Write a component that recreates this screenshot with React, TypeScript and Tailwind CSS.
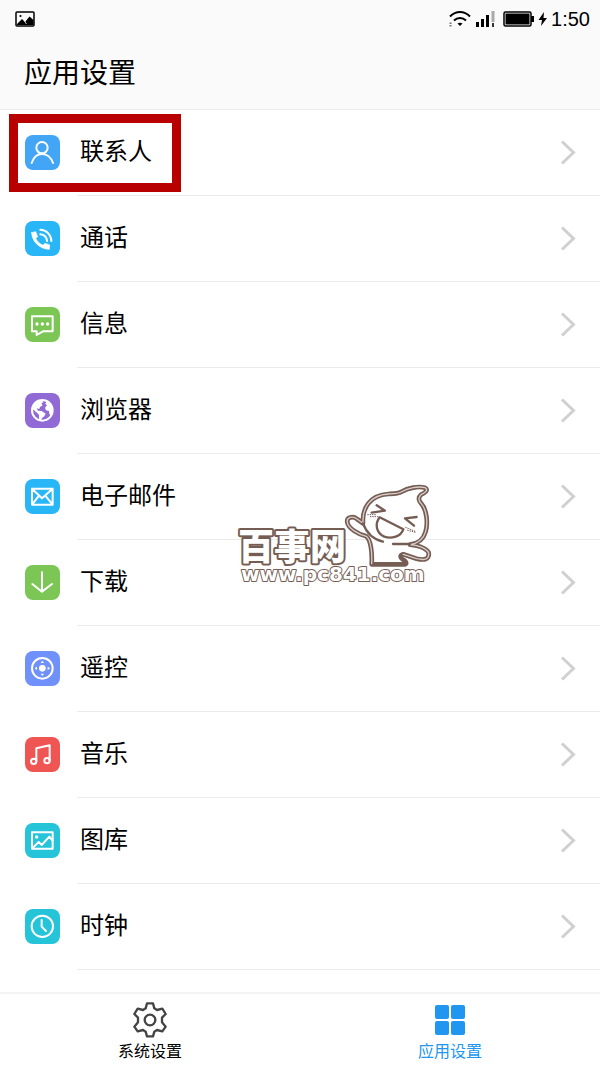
import { type ReactNode, useState } from 'react';
import { clsx } from 'clsx';

interface AppItem {
    id: string;
    label: string;
    color: string;
    icon: ReactNode;
}

const APPS: AppItem[] = [
    {
        id: 'contacts',
        label: '联系人',
        color: 'bg-[#42a5f5]',
        icon: (
            <>
                <circle cx="51" cy="38" r="17" />
                <path d="M20 84C26 66 38 57 51 57S78 66 84 84" />
            </>
        ),
    },
    {
        id: 'phone',
        label: '通话',
        color: 'bg-[#29b6f6]',
        icon: (
            <>
                <path d="M20 35L32 32L38 47L32 52C37 62 44 69 54 73L60 67L74 72L73 85C46 84 21 64 20 35Z" fill="white" strokeWidth="2" />
                <path d="M46 26C64 26 79 42 79 60M46 40C57 41 65 49 66 60" />
            </>
        ),
    },
    {
        id: 'messages',
        label: '信息',
        color: 'bg-[#7cc656]',
        icon: (
            <>
                <path d="M21 28H83V73H54L35 84V73H21Z" />
                <g fill="white" stroke="none">
                    <circle cx="36" cy="51" r="5" />
                    <circle cx="52" cy="51" r="5" />
                    <circle cx="68" cy="51" r="5" />
                </g>
            </>
        ),
    },
    {
        id: 'browser',
        label: '浏览器',
        color: 'bg-[#926ad6]',
        icon: (
            <>
                <circle cx="52" cy="52" r="31" />
                <path d="M22 44C26 31 37 23 50 22L55 27L49 32L53 37L45 42L43 48L35 46L39 53L50 54L62 62L58 70L51 75L48 83L42 79V66L36 59L25 50Z" fill="white" stroke="none" />
                <path d="M64 25L75 33L81 43L83 57L78 68L73 63L72 54L63 52L60 44L66 37L61 32Z" fill="white" stroke="none" />
            </>
        ),
    },
    {
        id: 'email',
        label: '电子邮件',
        color: 'bg-[#29b6f6]',
        icon: (
            <path d="M21 29H83V77H21ZM21 29L51 58L83 29M21 77L42 50M83 77L61 50" />
        ),
    },
    {
        id: 'downloads',
        label: '下载',
        color: 'bg-[#7cc656]',
        icon: <path d="M51 22V80M22 57L51 80L81 57" />,
    },
    {
        id: 'remote',
        label: '遥控',
        color: 'bg-[#7090fa]',
        icon: (
            <>
                <circle cx="52" cy="52" r="31" />
                <g fill="white" stroke="none">
                    <circle cx="52" cy="52" r="10" />
                    <path d="M52 29L57 36H47ZM52 75L57 68H47ZM29 52L36 47V57ZM75 52L68 47V57Z" />
                </g>
            </>
        ),
    },
    {
        id: 'music',
        label: '音乐',
        color: 'bg-[#ef5552]',
        icon: (
            <>
                <circle cx="26" cy="73" r="8" />
                <circle cx="66" cy="71" r="8" />
                <path d="M34 73V34L74 25V71" />
            </>
        ),
    },
    {
        id: 'gallery',
        label: '图库',
        color: 'bg-[#26c4d8]',
        icon: (
            <>
                <path d="M21 28H83V77H21Z" />
                <path d="M24 74L41 57L50 66L73 41L82 52" />
                <circle cx="35" cy="42" r="5" fill="white" stroke="none" />
            </>
        ),
    },
    {
        id: 'clock',
        label: '时钟',
        color: 'bg-[#26c4d8]',
        icon: (
            <>
                <circle cx="52" cy="52" r="32" />
                <path d="M50 33V53L63 66" />
            </>
        ),
    },
];

function StatusBar() {
    return (
        <div className="flex h-[38px] items-center pr-[10px] pl-[15px]">
            <svg className="h-4 w-5" viewBox="0 0 20 16">
                <rect x="1" y="1" width="18" height="14" rx="1" fill="none" stroke="black" strokeWidth="1.5" />
                <circle cx="5.5" cy="5" r="1.1" />
                <path d="M2 14V13L7 8L10 11L14.5 5.5L18.5 9V14Z" />
                <path d="M9.5 10L11.5 13" stroke="#fafafa" strokeWidth="0.8" />
            </svg>
            <div className="ml-auto flex items-center">
                {/* Wifi */}
                <svg className="h-4 w-[22px]" viewBox="0 0 22 16" fill="none" stroke="black" strokeWidth="2">
                    <path d="M1 5.5C7 -0.5 15 -0.5 21 5.5" />
                    <path d="M5 9.5C8.5 6 13.5 6 17 9.5" />
                    <path d="M8.5 12.5Q11 11 13.5 12.5L11 15Z" fill="black" stroke="none" />
                    <path d="M1.5 11.5V13M1.5 14V15.5" stroke="#777" strokeWidth="2" />
                </svg>
                {/* Signal */}
                <svg className="ml-1 h-4 w-5" viewBox="0 0 20 16">
                    <path d="M1 11H4V16H1ZM6 8H9V16H6ZM11 4H14V16H11Z" />
                    <path d="M16.5 0H19.5V11H16.5Z" fill="#aaa" />
                    <path d="M17 12H19V16H17Z" fill="#333" />
                </svg>
                {/* Battery */}
                <svg className="ml-2 h-4 w-[31px]" viewBox="0 0 31 16">
                    <rect x="1" y="1" width="27" height="14" rx="1.5" fill="none" stroke="black" strokeWidth="1.5" />
                    <rect x="2.5" y="2.5" width="24" height="11" />
                    <path d="M28 5H31V11H28Z" />
                </svg>
                <svg className="ml-1 h-4 w-[9px]" viewBox="0 0 9 16">
                    <path d="M6 1L0.5 9H4L3 15L9 7H5.5Z" />
                </svg>
                <span className="ml-1 font-['Liberation_Sans'] text-[20px] leading-[24px]">1:50</span>
            </div>
        </div>
    );
}

function AppRow({ app, highlighted }: { app: AppItem; highlighted: boolean }) {
    return (
        <li className="relative">
            <button type="button" className="flex h-[86px] w-full items-center pl-[25px] text-left">
                <span className={clsx('mb-px h-[35px] w-[35px] shrink-0 rounded-lg', app.color)}>
                    <svg
                        className="h-full w-full"
                        viewBox="0 0 105 105"
                        fill="none"
                        stroke="white"
                        strokeWidth="6"
                        strokeLinecap="round"
                        strokeLinejoin="round"
                    >
                        {app.icon}
                    </svg>
                </span>
                <span className="ml-[17px] flex h-full flex-1 items-center justify-between border-b border-[#ebebeb] pr-6 pl-[3px]">
                    <span className="pb-[6px] text-[24px] leading-[32px]">{app.label}</span>
                    <svg className="h-[26px] w-4" viewBox="0 0 16 26" fill="none" stroke="#d0d0d0" strokeWidth="3">
                        <path d="M2 1.5L13.5 12.5L2 23.5" />
                    </svg>
                </span>
            </button>
            {highlighted && (
                <div className="pointer-events-none absolute top-1 left-[9px] h-[78px] w-[172px] border-[9px] border-[#b80000]" />
            )}
        </li>
    );
}

function Watermark() {
    return (
        <svg
            className="pointer-events-none absolute top-[365px] left-[225px] h-[120px] w-[220px]"
            viewBox="0 0 220 120"
            stroke="#755d54"
            strokeLinecap="round"
            strokeLinejoin="round"
        >
            <g transform="scale(0.3333)" fill="none">
                <path
                    d="M440 268C442 235 438 195 424 184C400 178 370 160 367 142C364 126 384 122 396 132L414 145C411 100 435 60 490 57C510 56 520 56 528 51C550 38 580 33 600 38C612 45 600 54 588 59C579 67 580 76 589 86C606 105 609 145 602 170C595 195 580 205 555 209C575 210 603 218 611 233C614 252 600 257 575 251L535 238C523 242 526 248 533 253C543 258 546 265 541 268Z"
                    fill="white"
                    strokeWidth="14"
                />
                <path
                    d="M440 266C442 235 438 195 424 184C400 178 370 160 367 142C364 126 384 122 396 132L414 145C411 100 435 60 490 57C510 56 520 56 528 51C550 38 580 33 600 38C612 45 600 54 588 59C579 67 580 76 589 86C606 105 609 145 602 170C595 195 580 205 555 209C575 210 603 218 611 233C614 252 600 257 575 251L535 238"
                    stroke="#d8cdc8"
                    strokeWidth="4"
                />
                <g strokeWidth="7">
                    <path d="M414 145C425 175 445 193 474 200M504 207H555" />
                    <path d="M455 91L480 107L440 113M575 126L540 130L567 152" />
                    <path d="M464 127L535 163C528 184 500 193 478 185C453 174 449 146 464 127Z" />
                </g>
                <path d="M428 119H454M436 125H462M542 157L570 169M548 166L572 172" strokeWidth="3" strokeDasharray="2 5" />
            </g>
            <text x="13" y="85" fontSize="36" fontWeight="900" fill="white" strokeWidth="4" paintOrder="stroke">
                百事网
            </text>
            <text
                className="font-['DejaVu_Sans']"
                x="16"
                y="106"
                fontSize="20"
                fontWeight="700"
                fill="white"
                strokeWidth="2"
                paintOrder="stroke"
            >
                www.pc841.com
            </text>
        </svg>
    );
}

function GearIcon() {
    return (
        <svg className="h-9 w-9" viewBox="96 63 108 108" fill="none" stroke="#444" strokeWidth="7" strokeLinejoin="round">
            <path d="M141 67H159L163 82L171 87L187 83L197 99L186 110V124L197 137L187 151L171 147L163 152L159 166H141L137 152L129 147L113 151L103 137L114 124V110L103 99L113 83L129 87L137 82Z" />
            <circle cx="150" cy="117" r="16" />
        </svg>
    );
}

function GridIcon() {
    return (
        <svg className="h-9 w-9" viewBox="0 0 36 36" fill="#2196f0">
            <rect x="3" y="3" width="14" height="14" rx="2" />
            <rect x="19" y="3" width="14" height="14" rx="2" />
            <rect x="3" y="19" width="14" height="14" rx="2" />
            <rect x="19" y="19" width="14" height="14" rx="2" />
        </svg>
    );
}

const TABS = [
    { id: 'system', label: '系统设置', icon: <GearIcon /> },
    { id: 'apps', label: '应用设置', icon: <GridIcon /> },
];

export default function App() {
    const [activeTab, setActiveTab] = useState('apps');

    return (
        <div className="flex min-h-screen flex-col bg-white font-['Noto_Sans_CJK_SC',sans-serif] text-black">
            <header className="border-b border-[#ebebeb] bg-[#fafafa]">
                <StatusBar />
                <h1 className="px-6 pt-[13px] pb-[18px] text-[28px] leading-[40px]">应用设置</h1>
            </header>

            <main className="relative flex-1">
                <ul>
                    {APPS.map((app) => (
                        <AppRow key={app.id} app={app} highlighted={app.id === 'contacts'} />
                    ))}
                </ul>
                <Watermark />
            </main>

            <nav className="grid grid-cols-2 border-t-2 border-[#f3f3f3] pt-2 pb-1">
                {TABS.map((tab) => (
                    <button
                        key={tab.id}
                        type="button"
                        onClick={() => setActiveTab(tab.id)}
                        className={clsx('flex flex-col items-center', activeTab === tab.id && 'text-[#2196f0]')}
                    >
                        {tab.icon}
                        <span className="text-[16px] leading-[24px]">{tab.label}</span>
                    </button>
                ))}
            </nav>
        </div>
    );
}
